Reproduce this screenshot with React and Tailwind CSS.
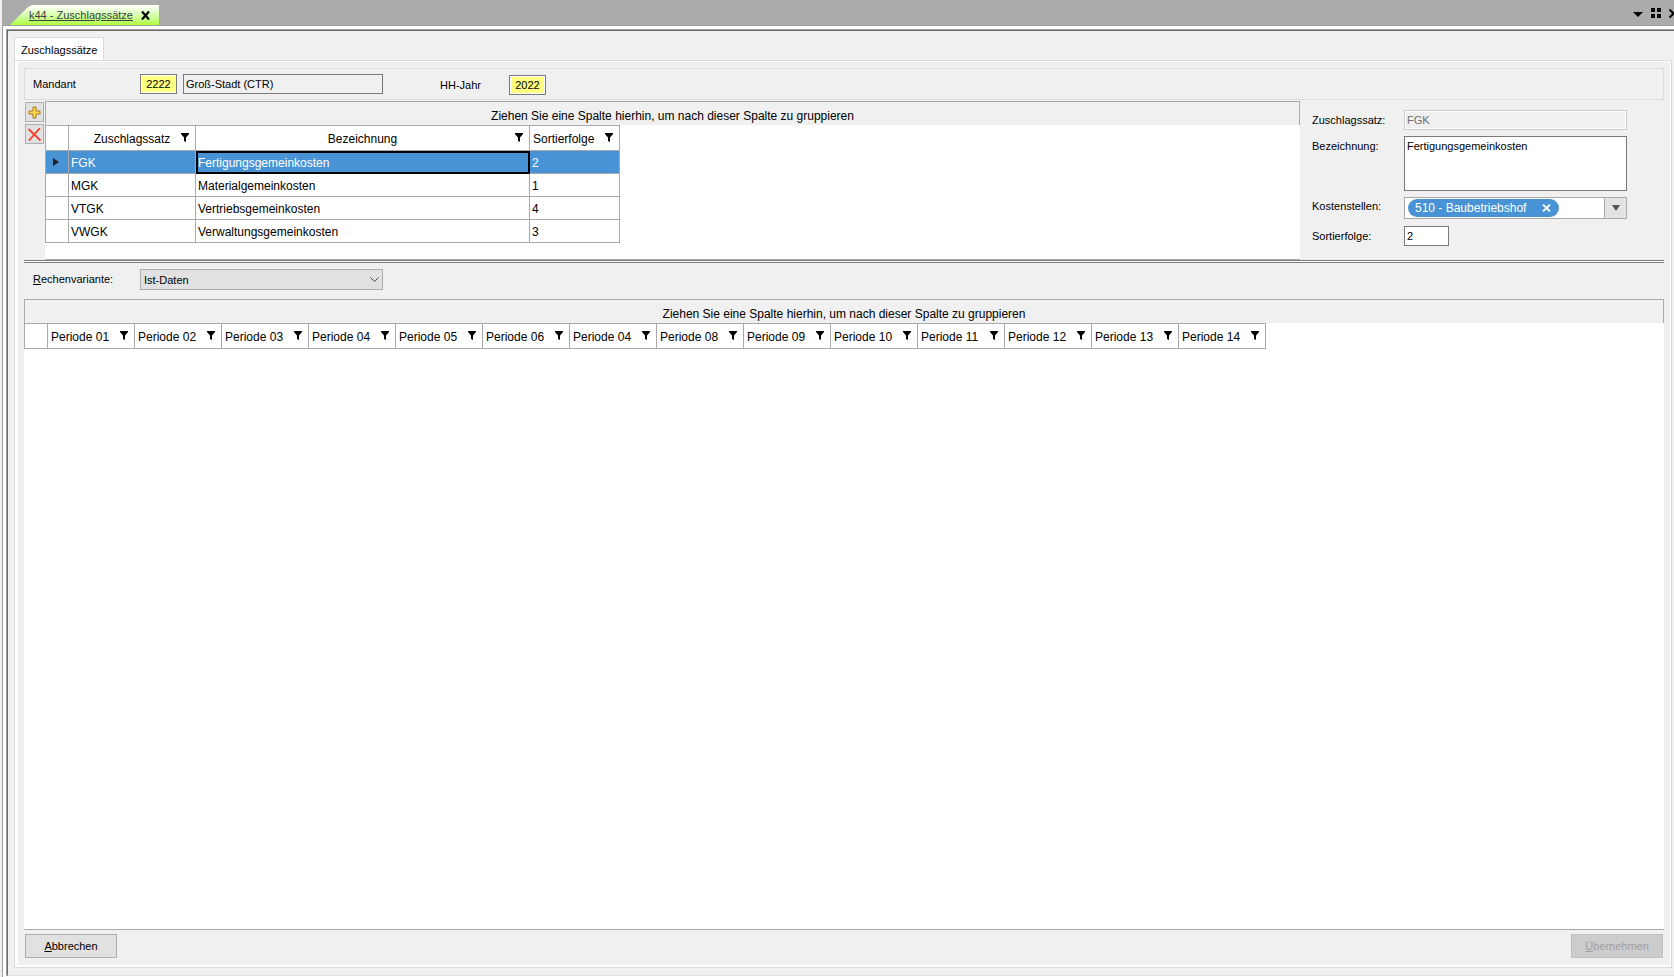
import React, { useState } from 'react';

const RATES = [
    { id: 'FGK', label: 'Fertigungsgemeinkosten', order: 2 },
    { id: 'MGK', label: 'Materialgemeinkosten', order: 1 },
    { id: 'VTGK', label: 'Vertriebsgemeinkosten', order: 4 },
    { id: 'VWGK', label: 'Verwaltungsgemeinkosten', order: 3 },
];

const PERIODS = ['01', '02', '03', '04', '05', '06', '04', '08', '09', '10', '11', '12', '13', '14'];

const GROUP_HINT = 'Ziehen Sie eine Spalte hierhin, um nach dieser Spalte zu gruppieren';

const FilterIcon = () => (
    <svg width="8" height="9" viewBox="0 0 8 9" className="shrink-0" aria-hidden="true">
        <path d="M0 0h8v1L5 4.5V9L3 8V4.5L0 1z" fill="#000" />
    </svg>
);

const HeaderCell = ({ children, center }) => (
    <th className="h-[26px] border-y border-r border-[#a9a9a9] bg-white p-0 font-normal">
        <div className={`flex h-6 items-center pr-1.5 pt-0.5 ${center ? 'pl-3.5' : 'pl-[3px]'}`}>
            <span className={`flex-1 whitespace-nowrap ${center ? 'text-center' : 'text-left'}`}>{children}</span>
            <span className="pb-1">
                <FilterIcon />
            </span>
        </div>
    </th>
);

const CornerCell = () => (
    <th className="h-[26px] border border-[#a9a9a9] bg-white p-0" aria-label="Zeilenauswahl" />
);

const GroupBar = () => (
    <div className="flex h-6 items-end justify-center border-x border-t border-[#a9a9a9] bg-[#f0f0f0] pb-px text-xs leading-4 text-black">
        {GROUP_HINT}
    </div>
);

const RateTable = ({ selected, onSelect }) => (
    <table className="w-[575px] table-fixed border-separate border-spacing-0 text-xs leading-4 text-black">
        <colgroup>
            <col className="w-6" />
            <col className="w-[127px]" />
            <col className="w-[334px]" />
            <col className="w-[90px]" />
        </colgroup>
        <thead>
            <tr>
                <CornerCell />
                <HeaderCell center>Zuschlagssatz</HeaderCell>
                <HeaderCell center>Bezeichnung</HeaderCell>
                <HeaderCell>Sortierfolge</HeaderCell>
            </tr>
        </thead>
        <tbody>
            {RATES.map((rate) => {
                const active = rate.id === selected;
                return (
                    <tr
                        key={rate.id}
                        onClick={() => onSelect(rate.id)}
                        className={active ? 'bg-[#4893d5] text-white' : 'bg-white'}
                    >
                        <td className="h-[23px] border-x border-b border-[#a9a9a9] p-0">
                            {active && (
                                <svg width="6" height="8" viewBox="0 0 6 8" className="ml-[7px]" aria-hidden="true">
                                    <path d="M0 0l6 4-6 4z" fill="#222" />
                                </svg>
                            )}
                        </td>
                        <td className="h-[23px] border-b border-r border-[#a9a9a9] p-0 pl-0.5 pt-0.5">{rate.id}</td>
                        <td
                            className={`h-[23px] border-b border-r border-[#a9a9a9] p-0 pl-0.5 pt-0.5 ${active ? 'outline-2 -outline-offset-2 outline-black' : ''}`}
                        >
                            {rate.label}
                        </td>
                        <td className="h-[23px] border-b border-r border-[#a9a9a9] p-0 pl-0.5 pt-0.5">{rate.order}</td>
                    </tr>
                );
            })}
        </tbody>
    </table>
);

const PeriodTable = () => (
    <table className="w-[1242px] table-fixed border-separate border-spacing-0 text-xs leading-4 text-black">
        <colgroup>
            <col className="w-6" />
            {PERIODS.map((p, i) => (
                <col key={i} className="w-[87px]" />
            ))}
        </colgroup>
        <thead>
            <tr>
                <CornerCell />
                {PERIODS.map((p, i) => (
                    <HeaderCell key={i}>Periode {p}</HeaderCell>
                ))}
            </tr>
        </thead>
    </table>
);

const WindowTabs = () => (
    <div className="flex h-[26px] items-end border-b border-[#a0a0a0] bg-[#ababab] pl-2">
        <div className="flex h-5 w-[149px] items-center bg-linear-to-b from-white to-[#adff2f] pl-[19px] text-[#404040] [clip-path:polygon(0_100%,18px_2px,22px_0,100%_0,100%_100%)]">
            <a href="#k44" className="whitespace-nowrap underline">k44 - Zuschlagssätze</a>
            <button type="button" aria-label="Schließen" className="ml-2">
                <svg width="9" height="9" viewBox="0 0 9 9" aria-hidden="true">
                    <path d="M1 0.5l7 8M8 0.5l-7 8" stroke="#000" strokeWidth="2.2" />
                </svg>
            </button>
        </div>
        <div className="ml-auto flex h-[25px] items-center gap-2 overflow-hidden">
            <button type="button" aria-label="Fensterliste">
                <svg width="10" height="5" viewBox="0 0 10 5" className="mt-1" aria-hidden="true">
                    <path d="M0 0h10L5 5z" fill="#000" />
                </svg>
            </button>
            <button type="button" aria-label="Kacheln">
                <svg width="10" height="10" viewBox="0 0 10 10" aria-hidden="true">
                    <path d="M0 0h4v4H0zM6 0h4v4H6zM0 6h4v4H0zM6 6h4v4H6z" fill="#000" />
                </svg>
            </button>
            <button type="button" aria-label="Alle schließen">
                <svg width="5" height="9" viewBox="0 0 5 9" className="mt-0.5" aria-hidden="true">
                    <path d="M0.5 0.5l4 4-4 4" fill="none" stroke="#000" strokeWidth="2" />
                </svg>
            </button>
        </div>
    </div>
);

const DetailForm = ({ rate }) => (
    <div className="flex w-[364px] shrink-0 flex-col pl-3 pt-[9px]">
        <div className="flex">
            <label htmlFor="rate-id" className="w-[92px] pt-[3px]">Zuschlagssatz:</label>
            <input
                id="rate-id"
                disabled
                value={rate.id}
                className="h-5 w-[223px] border border-[#cccccc] bg-[#f0f0f0] px-0.5 text-[#6d6d6d] ring-1 ring-inset ring-white"
            />
        </div>
        <div className="mt-1.5 flex">
            <label htmlFor="rate-label" className="w-[92px] pt-[3px]">Bezeichnung:</label>
            <textarea
                id="rate-label"
                readOnly
                value={rate.label}
                className="h-[55px] w-[223px] resize-none border border-[#7a7a7a] bg-white px-0.5 py-0.5 leading-[14px]"
            />
        </div>
        <div className="mt-1.5 flex">
            <label htmlFor="cost-centers" className="w-[92px] pt-0.5">Kostenstellen:</label>
            <div className="flex h-[22px] w-[223px] items-center border border-[#a9a9a9] bg-white pl-[3px]">
                <span className="flex h-[18px] w-[151px] items-center whitespace-nowrap rounded-full bg-[#4893d5] pl-[7px] text-xs leading-4 text-white">
                    510 - Baubetriebshof
                    <button type="button" aria-label="Entfernen" className="ml-4">
                        <svg width="9" height="8" viewBox="0 0 9 8" aria-hidden="true">
                            <path d="M1 0.5l7 7M8 0.5l-7 7" stroke="#fff" strokeWidth="1.8" />
                        </svg>
                    </button>
                </span>
                <button
                    type="button"
                    id="cost-centers"
                    aria-label="Kostenstellen auswählen"
                    className="ml-auto flex h-5 w-[22px] items-center justify-center border-l border-[#a9a9a9] bg-[#e3e3e3]"
                >
                    <svg width="8" height="6" viewBox="0 0 8 6" aria-hidden="true">
                        <path d="M0 0h8L4 6z" fill="#555" />
                    </svg>
                </button>
            </div>
        </div>
        <div className="mt-[7px] flex">
            <label htmlFor="rate-order" className="w-[92px] pt-[3px]">Sortierfolge:</label>
            <input
                id="rate-order"
                readOnly
                value={rate.order}
                className="h-5 w-[45px] border border-[#7a7a7a] bg-white px-0.5"
            />
        </div>
    </div>
);

const App = () => {
    const [selected, setSelected] = useState('FGK');
    const rate = RATES.find((r) => r.id === selected);

    return (
        <div className="flex min-h-screen flex-col bg-[#f0f0f0] pl-0.5 font-['Liberation_Sans',Arial,sans-serif] text-[11px] leading-[14px] text-black">
            <WindowTabs />

            {/* Document window frame */}
            <div className="flex flex-1 flex-col border-l border-[#a0a0a0] bg-white pb-px pl-[3px] pt-[3px]">
                <div className="flex flex-1 flex-col border-l border-t border-[#a0a0a0]">
                    <div className="flex flex-1 flex-col border-b border-l border-t border-b-[#e3e3e3] border-l-[#696969] border-t-[#696969] bg-[#f0f0f0] pb-[7px] pl-1.5 pr-0.5 pt-1.5">
                        <div className="flex">
                            <button
                                type="button"
                                className="h-[23px] w-[90px] border-x border-t border-[#dcdcdc] bg-white px-1.5 pt-0.5 text-left"
                            >
                                Zuschlagssätze
                            </button>
                        </div>

                        {/* Tab page */}
                        <div className="flex flex-1 flex-col border border-[#dcdcdc] bg-white pb-0.5 pl-[3px] pr-px pt-px">
                            <div className="flex flex-1 flex-col bg-[#f0f0f0] pb-[7px] pl-1.5 pr-1.5 pt-1.5">
                                <div className="flex h-8 items-start border border-[#dcdcdc] pl-2 pt-[5px]">
                                    <label htmlFor="client" className="w-[107px] pt-[3px]">Mandant</label>
                                    <input
                                        id="client"
                                        readOnly
                                        value="2222"
                                        className="h-5 w-[37px] border border-[#7a7a7a] bg-[#ffff80] text-center ring-1 ring-inset ring-white"
                                    />
                                    <input
                                        aria-label="Mandant Name"
                                        readOnly
                                        value="Groß-Stadt (CTR)"
                                        className="ml-1.5 h-5 w-[200px] border border-[#7a7a7a] bg-[#f0f0f0] px-0.5"
                                    />
                                    <label htmlFor="year" className="ml-[57px] w-[69px] pt-1">HH-Jahr</label>
                                    <input
                                        id="year"
                                        readOnly
                                        value="2022"
                                        className="mt-px h-5 w-[37px] border border-[#7a7a7a] bg-[#ffff80] text-center ring-1 ring-inset ring-white"
                                    />
                                </div>

                                <div className="mt-px flex h-[159px]">
                                    <div className="flex w-[21px] shrink-0 flex-col gap-0.5 pl-px pt-px">
                                        <button
                                            type="button"
                                            aria-label="Neu"
                                            className="flex h-5 w-[19px] items-center justify-center border border-[#adadad] bg-[#e1e1e1]"
                                        >
                                            <svg width="13" height="13" viewBox="0 0 13 13" aria-hidden="true">
                                                <path d="M5 1h3v4h4v3h-4v4h-3v-4h-4v-3h4z" fill="#ffd84f" stroke="#a8791c" />
                                            </svg>
                                        </button>
                                        <button
                                            type="button"
                                            aria-label="Löschen"
                                            className="flex h-5 w-[19px] items-center justify-center border border-[#adadad] bg-[#e1e1e1]"
                                        >
                                            <svg width="13" height="13" viewBox="0 0 13 13" aria-hidden="true">
                                                <path d="M1 1.5l11 10.5M11.5 0.5L1.5 12" stroke="#f4402a" strokeWidth="1.8" strokeLinecap="round" />
                                            </svg>
                                        </button>
                                    </div>
                                    <div className="min-w-0 flex-1 border-b border-[#a9a9a9] bg-white">
                                        <GroupBar />
                                        <RateTable selected={selected} onSelect={setSelected} />
                                    </div>
                                    <DetailForm rate={rate} />
                                </div>

                                {/* Splitter */}
                                <div className="h-[3px] border-y border-[#7a7a7a] bg-white" />

                                <div className="flex h-9 items-start pl-[9px] pt-1.5">
                                    <label htmlFor="variant" className="w-[107px] pt-[3px]">
                                        <span className="underline">R</span>echenvariante:
                                    </label>
                                    <div className="relative">
                                        <select
                                            id="variant"
                                            className="h-[21px] w-[243px] appearance-none border border-[#adadad] bg-[#e1e1e1] pl-[3px]"
                                        >
                                            <option>Ist-Daten</option>
                                        </select>
                                        <svg width="9" height="6" viewBox="0 0 9 6" className="pointer-events-none absolute right-1 top-2" aria-hidden="true">
                                            <path d="M0.5 0.5l4 4 4-4" fill="none" stroke="#444" />
                                        </svg>
                                    </div>
                                </div>

                                <div className="flex-1 border-b border-[#a9a9a9] bg-white">
                                    <GroupBar />
                                    <PeriodTable />
                                </div>

                                <div className="mt-1 flex justify-between pl-px pr-px">
                                    <button type="button" className="h-6 w-[92px] border border-[#adadad] bg-[#e1e1e1]">
                                        <span className="underline">A</span>bbrechen
                                    </button>
                                    <button
                                        type="button"
                                        disabled
                                        className="h-6 w-[92px] border border-[#bfbfbf] bg-[#cccccc] text-[#a0a0a0]"
                                    >
                                        <span className="underline">Ü</span>bernehmen
                                    </button>
                                </div>
                            </div>
                        </div>
                    </div>
                </div>
            </div>
        </div>
    );
};

export default App;
